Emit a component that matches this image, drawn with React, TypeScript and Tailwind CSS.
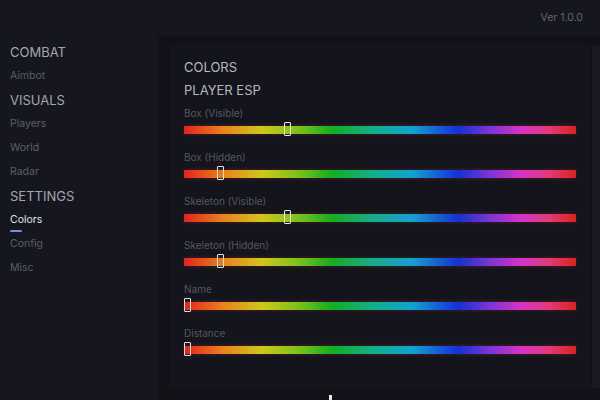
import React from "react";

interface ColorSlider {
  label: string;
  value: number;
}

const sliders: ColorSlider[] = [
  { label: "Box (Visible)", value: 66 },
  { label: "Box (Hidden)", value: 22 },
  { label: "Skeleton (Visible)", value: 66 },
  { label: "Skeleton (Hidden)", value: 22 },
  { label: "Name", value: 0 },
  { label: "Distance", value: 0 },
];

const sections = [
  { title: "COMBAT", items: ["Aimbot"] },
  { title: "VISUALS", items: ["Players", "World", "Radar"] },
  { title: "SETTINGS", items: ["Colors", "Config", "Misc"] },
];

const ACTIVE = "Colors";
const TRACK_W = 392;
const THUMB_W = 7;

function HueSlider({ label, value }: ColorSlider) {
  const left = Math.round((value / 255) * (TRACK_W - THUMB_W));
  return (
    <div>
      <div className="h-[14px] leading-[14px] text-[10px] text-[#545861] mt-[7px]">{label}</div>
      <div className="relative mt-[6px] h-[8px] w-[392px]">
        <div className="h-full w-full bg-[linear-gradient(90deg,#e2231f_0%,#e8821c_10%,#cfc81a_20%,#7cc21a_29%,#12ae22_38%,#13b08a_48%,#13a2d2_58%,#1530d4_70%,#7a34d8_78%,#d632c8_86%,#e23a7a_93%,#e0201e_100%)] shadow-[0_0_4px_rgba(255,80,60,0.25)]" />
        <div
          className="absolute top-[-4px] h-[14px] w-[7px] border border-[#e8e8ec] rounded-[1px]"
          style={{ left }}
        />
      </div>
    </div>
  );
}

export default function App() {
  return (
    <div className="relative w-[600px] h-[400px] overflow-hidden bg-[#16161e] flex flex-col font-['Inter',sans-serif]">
      {/* Top bar */}
      <div className="h-[36px] shrink-0 flex items-center justify-end pr-[17px]">
        <span className="text-[10.5px] text-[#62666e]">Ver 1.0.0</span>
      </div>

      <div className="flex flex-1 min-h-0">
        {/* Sidebar nav */}
        <div className="w-[158px] shrink-0 pt-[4px] pl-[10px]">
          {sections.map((s) => (
            <div key={s.title}>
              <div className="h-[24px] flex items-center pt-[2px] text-[13px] text-[#a3a7b0]">{s.title}</div>
              {s.items.map((item) =>
                item === ACTIVE ? (
                  <div key={item} className="h-[24px] flex flex-col pt-[5px]">
                    <span className="leading-[14px] text-[10.5px] text-[#dfe1e6]">{item}</span>
                    <div className="mt-[3px] h-[2px] w-[12px] bg-[#6f92dd] rounded-full" />
                  </div>
                ) : (
                  <div key={item} className="h-[24px] flex items-center text-[10.5px] text-[#5a5e67]">
                    {item}
                  </div>
                )
              )}
            </div>
          ))}
        </div>

        {/* Content */}
        <div className="flex-1 flex bg-[#111118] pt-[9px] pl-[12px] pb-[12px]">
          <div className="w-[420px] bg-[#14141c] pt-[13px] px-[14px]">
            <div className="h-[18px] leading-[18px] text-[13px] text-[#b4b7bf]">COLORS</div>
            <div className="h-[18px] leading-[18px] text-[13px] text-[#b4b7bf] mt-[5px]">PLAYER ESP</div>
            <div className="flex flex-col gap-[9px]">
              {sliders.map((s) => (
                <HueSlider key={s.label} {...s} />
              ))}
            </div>
          </div>
          <div className="ml-[2px] w-[8px] bg-[#191921]" />
        </div>
      </div>

      {/* mouse pointer */}
      <div className="absolute left-[329px] top-[395px] w-[3px] h-[5px] bg-[#e8e8e8]" />
    </div>
  );
}
